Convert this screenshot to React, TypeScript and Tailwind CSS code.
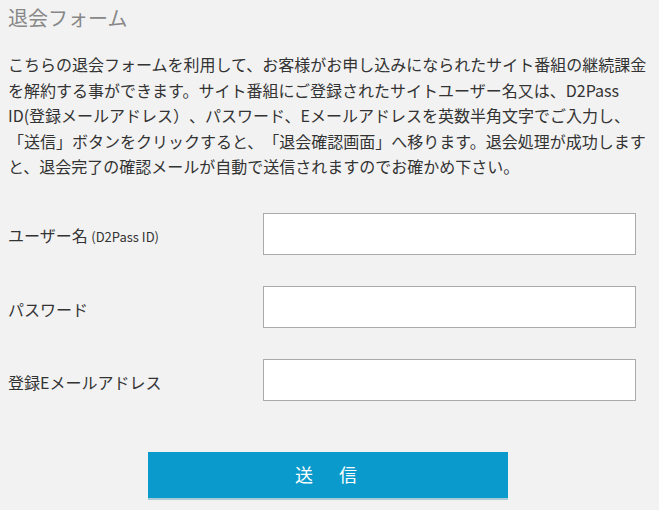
const lines = [
  "こちらの退会フォームを利用して、お客様がお申し込みになられたサイト番組の継続課金",
  "を解約する事ができます。サイト番組にご登録されたサイトユーザー名又は、D2Pass",
  "ID(登録メールアドレス）、パスワード、Eメールアドレスを英数半角文字でご入力し、",
  "「送信」ボタンをクリックすると、「退会確認画面」へ移ります。退会処理が成功します",
  "と、退会完了の確認メールが自動で送信されますのでお確かめ下さい。",
];

const inputClass =
  "h-[42px] w-[373px] border border-[#aaaaaa] bg-white px-2 text-[16px] text-[#333] outline-none";

function Row({ label, type = "text" }: { label: React.ReactNode; type?: string }) {
  return (
    <div className="flex items-center">
      <label className="w-[255px] pt-[4px] text-[16px] leading-[24px] text-[#333]">
        {label}
      </label>
      <input type={type} className={inputClass} />
    </div>
  );
}

export default function App() {
  return (
    <div className="min-h-screen bg-[#f2f2f2] px-2 font-['Noto_Sans_CJK_JP',sans-serif] [text-spacing-trim:space-all]">
      <h1 className="pt-[5px] text-[20px] leading-[26px] text-[#888888]">
        退会フォーム
      </h1>

      <p className="mt-[21px] text-[16px] leading-[25.6px] text-[#333333]">
        {lines.map((l) => (
          <span key={l} className="block whitespace-nowrap">
            {l}
          </span>
        ))}
      </p>

      <form className="mt-[33px] flex flex-col gap-[31px]">
        <Row
          label={
            <>
              ユーザー名{" "}
              <span className="text-[13px]">(D2Pass ID)</span>
            </>
          }
        />
        <Row label="パスワード" type="password" />
        <Row label="登録Eメールアドレス" type="email" />

        <button
          type="button"
          className="ml-[140px] mt-[20px] h-[46px] w-[360px] bg-[#0a9acb] text-[18px] tracking-[4px] text-white shadow-[0_2px_0_#a9cbd8]"
        >
          送　信
        </button>
      </form>
    </div>
  );
}
